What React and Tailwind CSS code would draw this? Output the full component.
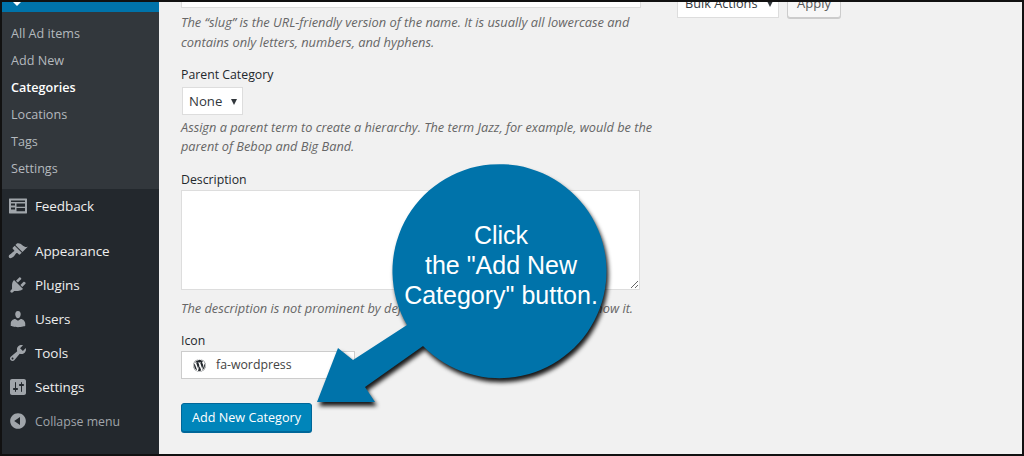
import React from "react";
import { FaWordpress } from "react-icons/fa";

const icons = {
  Feedback: "M1.500 2.500h17c.3 0 .5.2.5.5v14c0 .3-.2.5-.5.5h-17c-.3 0-.5-.2-.5-.5V3c0-.3.2-.5.5-.5zM3 7.500V9.500h4V7.500H3zm5.500 0v3.200H17V7.500H8.500zM3 11.500v2h4v-2H3zm5.500.5v3.200H17V12H8.500zM3 4.500v1.600h14V4.500H3z",
  Appearance: "M14.48 11.06L7.41 3.99l1.5-1.5c.5-.56 2.3-.47 3.51.32 1.21.8 1.43 1.28 2.91 2.1 1.18.64 2.45 1.26 4.45.85zm-.71.71L6.7 4.7 4.93 6.47c-.39.39-.39 1.02 0 1.41l1.06 1.06c.39.39.39 1.03 0 1.42-.6.6-1.43 1.11-2.21 1.69-.35.26-.7.53-1.01.84C1.43 13.23 0 15.55 1.19 16.74c1.19 1.19 3.51-.24 4.49-1.22.31-.31.58-.66.84-1.01.58-.78 1.09-1.61 1.69-2.21.39-.39 1.03-.39 1.42 0l1.06 1.06c.39.39 1.02.39 1.41 0z",
  Plugins: "M13.11 4.36L9.87 7.6 8 5.73l3.24-3.24c.35-.34 1.05-.2 1.56.32.52.51.66 1.21.31 1.55zm-8 1.77l.91-1.12 9.01 9.01-1.19.84c-.71.71-2.63 1.16-3.82 1.16H6.14L4.9 17.26c-.59.59-1.54.59-2.12 0-.59-.58-.59-1.53 0-2.12l1.24-1.24v-3.88c0-1.13.4-3.19 1.09-3.89zm7.26 3.97l3.24-3.24c.34-.35 1.04-.21 1.55.31.52.51.66 1.21.31 1.55l-3.24 3.25z",
  Users: "M10 9.25c-2.27 0-2.73-3.44-2.73-3.44C7 4.02 7.82 2 9.97 2c2.16 0 2.98 2.02 2.71 3.81 0 0-.41 3.44-2.68 3.44zm0 2.57L12.72 10c2.39 0 4.52 2.33 4.52 4.53v2.49s-3.65 1.13-7.24 1.13c-3.65 0-7.24-1.13-7.24-1.13v-2.49c0-2.25 1.94-4.48 4.47-4.48z",
  Tools: "M16.68 9.77c-1.34 1.34-3.3 1.67-4.95.99l-5.41 6.52c-.99.99-2.59.99-3.58 0s-.99-2.59 0-3.57l6.52-5.42c-.68-1.65-.35-3.61.99-4.95 1.28-1.28 3.12-1.62 4.72-1.06l-2.89 2.89 2.82 2.82 2.86-2.87c.53 1.58.18 3.39-1.08 4.65zM3.81 16.21c.4.39 1.04.39 1.43 0 .4-.4.4-1.04 0-1.43-.39-.4-1.03-.4-1.43 0-.39.39-.39 1.03 0 1.43z",
  Settings: "M18 16V4c0-1.1-.9-2-2-2H4c-1.1 0-2 .9-2 2v12c0 1.1.9 2 2 2h12c1.100 0 2-.9 2-2zM8 11h1c.55 0 1 .45 1 1s-.45 1-1 1H8v1.500c0 .28-.22.5-.5.5s-.5-.22-.5-.5V13H6c-.55 0-1-.45-1-1s.45-1 1-1h1V5.500c0-.28.22-.5.5-.5s.5.22.5.5V11zm5-2h-1c-.55 0-1-.45-1-1s.45-1 1-1h1V5.500c0-.28.22-.5.5-.5s.5.22.5.5V7h1c.55 0 1 .45 1 1s-.45 1-1 1h-1v5.500c0 .28-.22.5-.5.5s-.5-.22-.5-.5V9z",
  "Collapse menu": "M10 2.160c4.330 0 7.840 3.510 7.840 7.840s-3.510 7.840-7.840 7.840S2.160 14.330 2.160 10 5.710 2.160 10 2.160zm2 11.720V6.120L6.180 9.970z",
};

function Icon({ name }) {
  return (
    <svg viewBox="0 0 20 20" className="w-5 h-5 shrink-0 text-[#a0a5aa]" fill="currentColor">
      <path fillRule="evenodd" d={icons[name]} />
    </svg>
  );
}

function MenuRow({ name, muted }) {
  return (
    <div className={`h-[34px] flex items-center gap-[7px] pl-[6px] ${muted ? "text-[#a0a5aa]" : "text-[#eeeeee]"}`}>
      <Icon name={name} />
      <span className={muted ? "text-[12.3px] relative top-[1px]" : "text-[13.5px] tracking-[-0.1px]"}>{name}</span>
    </div>
  );
}

function SubItem({ children, active }) {
  return (
    <div className={`h-[27px] flex items-center text-[12.6px] pl-[9px] ${active ? "font-semibold text-white" : "text-[#b4b9be]"}`}>
      {children}
    </div>
  );
}

function Caret() {
  return <span className="w-0 h-0 border-x-[3.500px] border-x-transparent border-t-[6px] border-t-[#32373c]" />;
}

const help = "italic text-[#666666]";
const label = "text-[12.3px] leading-[18px] text-[#23282d]";

export default function App() {
  return (
    <div className="relative w-[1024px] h-[456px] overflow-hidden flex border-t-2 border-x-2 border-b-2 border-[#111111] bg-[#f1f1f1] font-['Open_Sans',sans-serif]">
      <aside className="w-[157px] shrink-0 bg-[#23282d] flex flex-col">
        <div className="relative h-[10px] bg-[#0073aa] shrink-0">
          <span className="absolute left-[11px] top-0 w-0 h-0 border-x-[4px] border-x-transparent border-t-[4px] border-t-white" />
        </div>
        <div className="bg-[#32373c] pt-[9px] pb-[6px]">
          <SubItem>All Ad items</SubItem>
          <SubItem>Add New</SubItem>
          <SubItem active>Categories</SubItem>
          <SubItem>Locations</SubItem>
          <SubItem>Tags</SubItem>
          <SubItem>Settings</SubItem>
        </div>
        <MenuRow name="Feedback" />
        <div className="h-[11px]" />
        <MenuRow name="Appearance" />
        <MenuRow name="Plugins" />
        <MenuRow name="Users" />
        <MenuRow name="Tools" />
        <MenuRow name="Settings" />
        <MenuRow name="Collapse menu" muted />
      </aside>

      <main className="flex-1 flex pl-[22px] items-start">
        <div className="w-[459px] shrink-0 flex flex-col">
          <div className="h-[6px] bg-white border-x border-b border-[#dddddd] mr-[-1px]" />
          <p className={`${help} text-[12.85px] leading-[20px] mt-[4px] whitespace-nowrap`}>The “slug” is the URL-friendly version of the name. It is usually all lowercase and<br />contains only letters, numbers, and hyphens.</p>
          <div className={`${label} mt-[14px]`}>Parent Category</div>
          <div className="mt-[3px] ml-[1px] w-[61px] h-[28px] bg-white border border-[#dddddd] flex items-center justify-between pl-[6px] pr-[5px] pt-[1px] text-[13.2px] text-[#32373c]">
            None <Caret />
          </div>
          <p className={`${help} text-[12.75px] leading-[19px] mt-[3px] whitespace-nowrap`}>Assign a parent term to create a hierarchy. The term Jazz, for example, would be the<br />parent of Bebop and Big Band.</p>
          <div className={`${label} mt-[15px]`}>Description</div>
          <div className="mt-[1px] h-[100px] bg-white border border-[#dddddd] relative">
            <svg className="absolute right-0 bottom-0 w-[9px] h-[9px] text-[#666666]" viewBox="0 0 9 9" stroke="currentColor" fill="none"><path d="M1 8L8 1M5 8L8 5" /></svg>
          </div>
          <p className={`${help} text-[12.8px] leading-[18px] mt-[9px] whitespace-nowrap`}>The description is not prominent by default; however, some themes may show it.</p>
          <div className={`${label} mt-[15px]`}>Icon</div>
          <div className="mt-[1px] w-[174px] h-[28px] bg-white border border-[#cccccc] flex items-center justify-between pl-[11px] pr-[8px] pt-[1px] text-[12.300px] text-[#444444]">
            <span className="flex items-center gap-[10px]"><FaWordpress className="w-[13px] h-[13px] text-[#23282d]" />fa-wordpress</span>
            <span className="w-0 h-0 border-x-[3px] border-x-transparent border-t-[4px] border-t-[#888888]" />
          </div>
          <button className="mt-[24px] w-[131px] h-[29px] bg-[#0085ba] border border-[#006799] rounded-[3px] shadow-[0_1px_0_#006799] text-white text-[12.650px] text-center">Add New Category</button>
        </div>

        <div className="ml-[37px] -mt-[12px] flex items-start gap-[8px]">
          <div className="w-[102px] h-[28px] bg-white border border-[#dddddd] flex items-center justify-between pl-[7px] pr-[5px] text-[12.700px] text-[#32373c]">
            Bulk Actions <Caret />
          </div>
          <button className="w-[54px] h-[28px] bg-[#f7f7f7] border border-[#cccccc] rounded-[3px] shadow-[0_1px_0_#cccccc] text-[13px] text-[#555555]">Apply</button>
        </div>
      </main>

      {/* Callout annotation laid over the page */}
      <div className="absolute left-[-2px] top-[-2px] w-[1024px] h-[456px] pointer-events-none">
        <svg className="absolute inset-0 drop-shadow-[2px_4px_2px_rgba(0,0,0,0.9)]" width="1024" height="456" viewBox="0 0 1024 456">
          <path fill="#0073aa" d="M407 325L353 360L338 348L317 402H375L365 387L423 346A107 107 0 1 0 407 325Z" />
        </svg>
        <div className="absolute left-[391px] top-[220px] w-[220px] text-center text-white text-[25px] leading-[30px] font-['Liberation_Sans',sans-serif]">
          Click<br />the "Add New<br />Category" button.
        </div>
      </div>
    </div>
  );
}
